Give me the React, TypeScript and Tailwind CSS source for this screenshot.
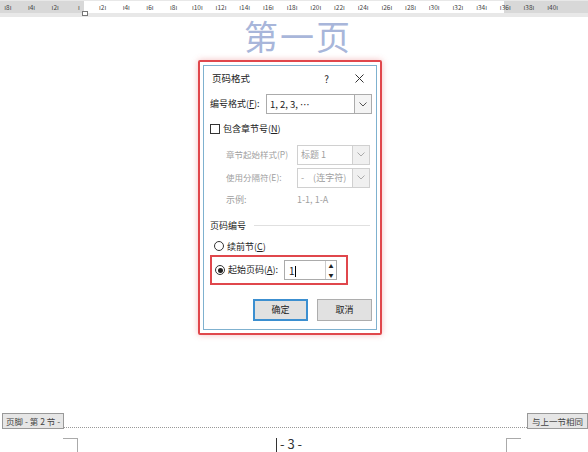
const F = '"Microsoft YaHei","Noto Sans CJK SC",sans-serif';

function Chev({ dis }: { dis?: boolean }) {
  return (
    <div className={`w-[17px] h-full border-l ${dis ? 'border-[#d0d0d0] bg-[#f0f0f0]' : 'border-[#ababab] bg-[#f4f4f4]'} flex items-center justify-center`}>
      <svg width="8" height="5" viewBox="0 0 8 5"><path d="M0.5 0.5 L4 4 L7.5 0.5" fill="none" stroke={dis ? '#aaa' : '#555'} strokeWidth="1" /></svg>
    </div>
  );
}

export default function App() {
  const nums = ['8', '4', '2', '', '2', '4', '6', '8', '10', '12', '14', '16', '18', '20', '22', '24', '26', '28', '30', '32', '34', '36', '38', '40'];
  return (
    <div className="relative w-[588px] h-[452px] bg-white overflow-hidden text-[#222]" style={{ fontFamily: F }}>
      {/* ruler */}
      <div className="h-[17px] bg-[#e8e8e8] flex items-start pt-[1px]">
        <div className="w-[84px] bg-[#d8d8d8] h-[12px]" />
        <div className="w-[420px] bg-white h-[12px]" />
        <div className="flex-1 bg-[#d8d8d8] h-[12px]" />
      </div>
      <div className="absolute left-[-4px] top-[1px] h-[12px] flex text-[6.5px] text-[#444] leading-[12px] whitespace-nowrap">
        {nums.map((n, i) => (
          <div key={i} className="w-[23.7px] text-center shrink-0 overflow-hidden">{n ? `ı${n}ı` : 'ı'}</div>
        ))}
      </div>
      <div className="absolute left-[82px] top-[11px] w-[6px] h-[5px] border border-[#777] bg-white" />
      {/* title */}
      <div className="flex justify-center pl-[8px] mt-[1px]">
        <div className="text-[34px] leading-[36px] text-[#a8b6da] tracking-[2px]">第一页</div>
      </div>

      {/* dialog */}
      <div className="absolute left-[198px] top-[60px] w-[184px] h-[275px] border-2 border-[#e0474c] rounded-[2px] p-[3px] shadow-[0_0_6px_rgba(224,71,76,0.35)]">
        <div className="w-full h-full bg-white border border-[#7fb1cf] text-[9px] relative">
          <div className="flex items-center h-[22px] px-[8px] pt-[2px]">
            <span className="flex-1 text-[9.5px]">页码格式</span>
            <span className="text-[10px] mr-[26px]">?</span>
            <svg width="9" height="9" viewBox="0 0 9 9" className="mr-[4px]"><path d="M0.5 0.5 L8.5 8.5 M8.5 0.5 L0.5 8.5" stroke="#333" strokeWidth="1" /></svg>
          </div>
          <div className="flex items-center mt-[6px] pl-[6px]">
            <span className="w-[56px]">编号格式(<u>F</u>):</span>
            <div className="w-[106px] h-[20px] border border-[#ababab] flex items-center">
              <span className="flex-1 pl-[3px] text-[9.5px]">1, 2, 3, …</span>
              <Chev />
            </div>
          </div>
          <div className="flex items-center mt-[8px] pl-[6px]">
            <div className="w-[10px] h-[10px] border border-[#333] mr-[3px]" />
            <span>包含章节号(<u>N</u>)</span>
          </div>
          <div className="text-[#a0a0a0] pl-[22px]">
            <div className="flex items-center mt-[9px]">
              <span className="w-[71px] text-[8.5px]">章节起始样式(P)</span>
              <div className="w-[73px] h-[20px] border border-[#d0d0d0] flex items-center">
                <span className="flex-1 pl-[3px]">标题 1</span>
                <Chev dis />
              </div>
            </div>
            <div className="flex items-center mt-[3px]">
              <span className="w-[71px] text-[8.5px]">使用分隔符(E):</span>
              <div className="w-[73px] h-[20px] border border-[#d0d0d0] flex items-center">
                <span className="flex-1 pl-[3px]">-　(连字符)</span>
                <Chev dis />
              </div>
            </div>
            <div className="flex items-center mt-[5px]">
              <span className="w-[71px]">示例:</span>
              <span>1-1, 1-A</span>
            </div>
          </div>
          <div className="flex items-center mt-[13px] pl-[6px] pr-[6px]">
            <span>页码编号</span>
            <div className="flex-1 h-px bg-[#e0e0e0] ml-[8px]" />
          </div>
          <div className="flex items-center mt-[7px] pl-[10px]">
            <div className="w-[10px] h-[10px] rounded-full border border-[#333] mr-[3px]" />
            <span>续前节(<u>C</u>)</span>
          </div>
          <div className="ml-[6px] mt-[2px] w-[138px] h-[30px] border-2 border-[#e0474c] flex items-center pl-[3px]">
            <div className="w-[10px] h-[10px] rounded-full border border-[#333] mr-[3px] flex items-center justify-center">
              <div className="w-[5px] h-[5px] rounded-full bg-[#222]" />
            </div>
            <span>起始页码(<u>A</u>):</span>
            <div className="ml-[6px] w-[53px] h-[20px] border border-[#ababab] flex items-center">
              <span className="flex-1 pl-[4px] text-[10px]">1<span className="inline-block w-px h-[11px] bg-black align-middle" /></span>
              <div className="w-[11px] h-full flex flex-col border-l border-[#ccc]">
                <div className="flex-1 flex items-center justify-center text-[5px]">▲</div>
                <div className="flex-1 flex items-center justify-center text-[5px]">▼</div>
              </div>
            </div>
          </div>
          <div className="flex justify-end gap-[9px] mt-[14px] pr-[4px]">
            <div className="w-[55px] h-[22px] border-2 border-[#3c8fd0] bg-[#e1e1e1] flex items-center justify-center">确定</div>
            <div className="w-[55px] h-[22px] border border-[#adadad] bg-[#e1e1e1] flex items-center justify-center">取消</div>
          </div>
        </div>
      </div>

      {/* footer */}
      <div className="absolute left-0 right-0 top-[413px]">
        <div className="flex items-end">
          <div className="ml-[2px] px-[3px] h-[16px] border border-[#999] bg-[#e6e6e6] text-[8.5px] text-[#444] flex items-center">页脚 - 第 2 节 -</div>
          <div className="flex-1 border-b border-dotted border-[#999] mb-[1px]" />
          <div className="px-[4px] h-[16px] border border-[#999] bg-[#e6e6e6] text-[8.5px] text-[#444] flex items-center">与上一节相同</div>
        </div>
        <div className="flex items-start mt-[9px] h-[20px]">
          <div className="ml-[63px] w-[15px] h-[20px] border-t border-r border-[#aaa]" />
          <div className="ml-[198px] flex items-start text-[13px] text-[#333] leading-none">
            <div className="w-px h-[20px] bg-[#333] mr-[3px]" /><span className="mt-[-1px]">- 3 -</span>
          </div>
          <div className="ml-[204px] w-[15px] h-[20px] border-t border-l border-[#aaa]" />
        </div>
      </div>
    </div>
  );
}
